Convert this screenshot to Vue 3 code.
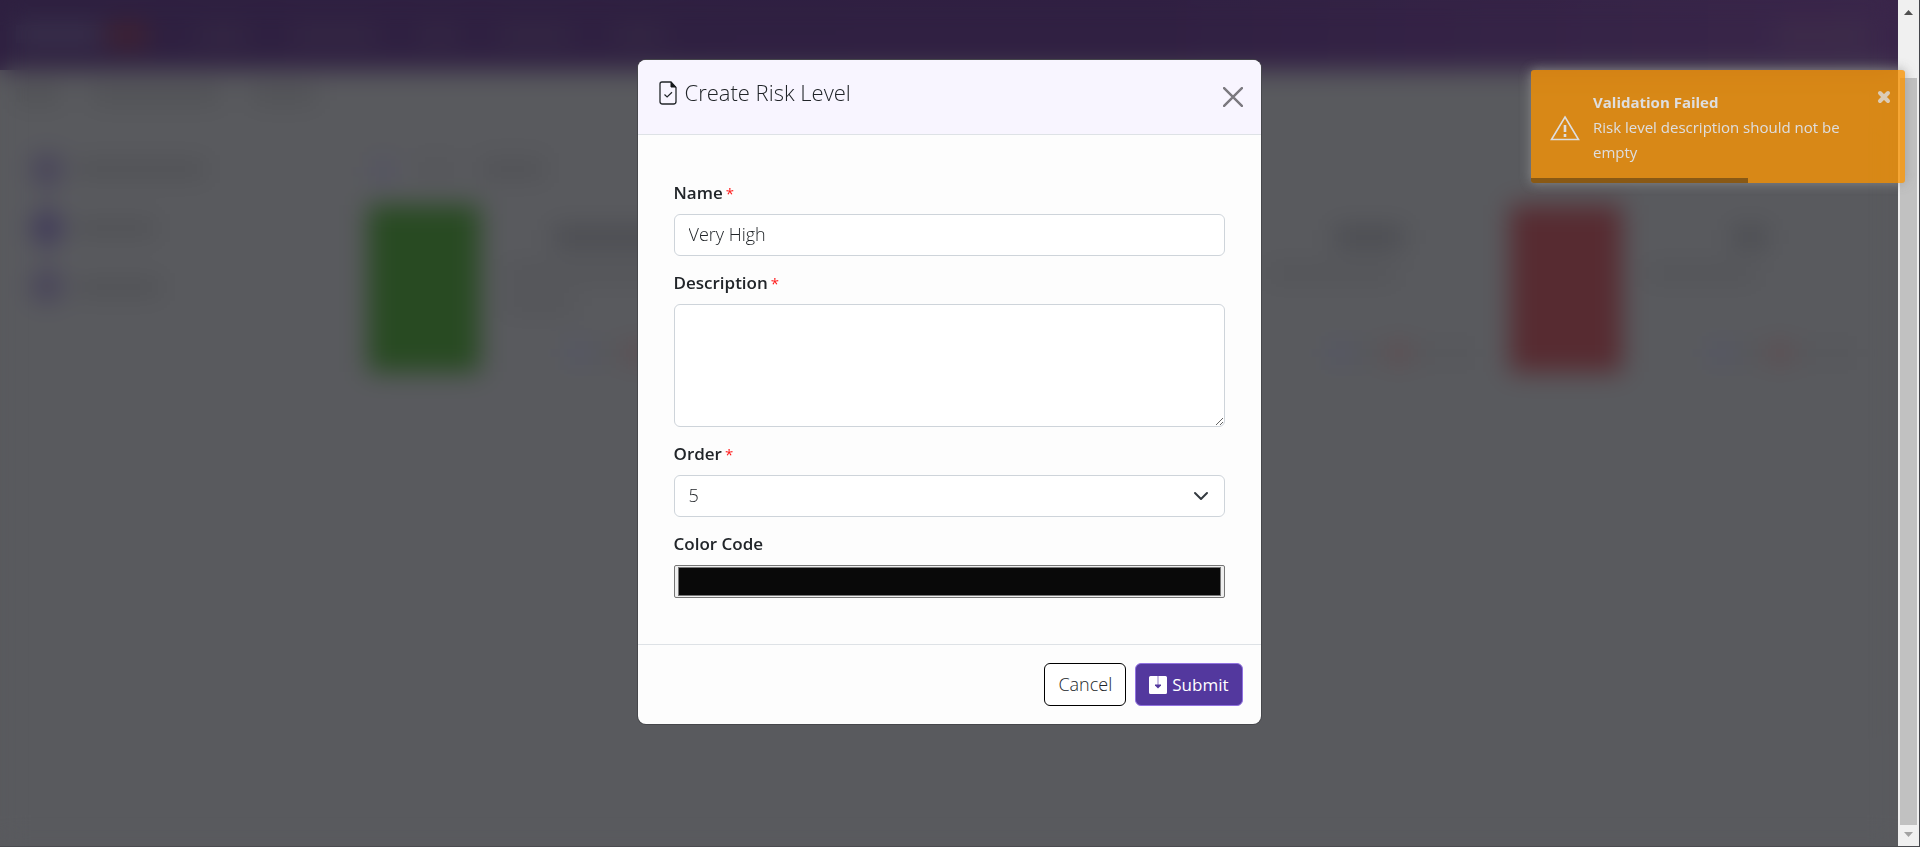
<script setup>
import { ref } from 'vue'

const name = ref('Very High')
const description = ref('')
const order = ref('5')
const color = ref('#090909')
const progress = ref(58)

const navItems = [50, 85, 35, 70, 50]
const crumbs = [45, 130, 65]
const steps = [
  { width: 130, active: false },
  { width: 80, active: true },
  { width: 85, active: false }
]
const levels = [
  { tone: 'green', title: 110, lines: [200, 70] },
  { tone: 'hidden', title: 80, lines: [180] },
  { tone: 'hidden', title: 70, lines: [130] },
  { tone: 'red', title: 34, lines: [110] }
]
</script>

<template>
  <div class="screen">
    <div class="content">
      <div class="page" aria-hidden="true">
        <div class="navbar">
          <div class="brand"><i class="brand-main"></i><i class="brand-accent"></i></div>
          <div class="nav-items">
            <i v-for="(w, n) in navItems" :key="n" class="nav-bar" :style="{ width: w + 'px' }"></i>
          </div>
          <i class="nav-bar account"></i>
        </div>
        <div class="crumbs">
          <i v-for="(w, n) in crumbs" :key="n" class="bar" :style="{ width: w + 'px' }"></i>
        </div>
        <div class="workspace">
          <div class="steps">
            <div v-for="(s, n) in steps" :key="n" class="step">
              <i class="dot" :class="{ active: s.active }"></i>
              <i class="bar" :style="{ width: s.width + 'px' }"></i>
            </div>
          </div>
          <div class="panel">
            <div class="panel-head"><i class="panel-dot"></i><i class="bar short"></i><i class="bar mid"></i></div>
            <div class="levels">
              <div v-for="(l, n) in levels" :key="n" class="level">
                <i class="swatch" :class="l.tone"></i>
                <div class="level-text">
                  <i class="bar dark" :style="{ width: l.title + 'px' }"></i>
                  <div class="lines">
                    <i v-for="(w, k) in l.lines" :key="k" class="bar" :style="{ width: w + 'px' }"></i>
                  </div>
                  <div class="actions"><i class="act blue"></i><i class="act word"></i><i class="act pink"></i><i class="act word"></i><i class="act word"></i></div>
                </div>
              </div>
            </div>
          </div>
        </div>
      </div>

      <div class="overlay">
        <form class="dialog" role="dialog" aria-labelledby="dialog-title" @submit.prevent>
          <header class="dialog-head">
            <h1 id="dialog-title">
              <svg class="title-icon" viewBox="0 0 18 24" aria-hidden="true">
                <path d="M3 1h9l5 5.500V20.500a2.500 2.500 0 0 1-2.500 2.500H3.500A2.500 2.500 0 0 1 1 20.500V3a2 2 0 0 1 2-2Z" fill="none" stroke="#212529" stroke-width="1.300" />
                <path d="M12 1.500v4.500h4.500Z" fill="#15171a" stroke="#15171a" stroke-width="1" />
                <path d="m5.500 13.500 2.600 2.400 4.900-4.700" fill="none" stroke="#212529" stroke-width="1.200" />
              </svg>
              <span>Create Risk Level</span>
            </h1>
            <button type="button" class="close" aria-label="Close">
              <svg viewBox="0 0 18 18" aria-hidden="true"><path d="m1 1 16 16M17 1 1 17" stroke="#7c7a80" stroke-width="2.200" stroke-linecap="round" /></svg>
            </button>
          </header>

          <div class="dialog-body">
            <div class="field">
              <label for="name">Name<span class="req">*</span></label>
              <input id="name" v-model="name" class="control" type="text" />
            </div>
            <div class="field">
              <label for="description">Description<span class="req">*</span></label>
              <textarea id="description" v-model="description" class="control area"></textarea>
            </div>
            <div class="field">
              <label for="order">Order<span class="req">*</span></label>
              <div class="select-wrap">
                <select id="order" v-model="order" class="control">
                  <option>1</option>
                  <option>2</option>
                  <option>3</option>
                  <option>4</option>
                  <option>5</option>
                </select>
                <svg class="chevron" viewBox="0 0 16 16" aria-hidden="true"><path d="m2 5 6 6 6-6" fill="none" stroke="#343a40" stroke-width="2" stroke-linecap="round" stroke-linejoin="round" /></svg>
              </div>
            </div>
            <div class="field">
              <label for="color">Color Code</label>
              <input id="color" v-model="color" class="color" type="color" />
            </div>
          </div>

          <footer class="dialog-foot">
            <button type="button" class="btn cancel">Cancel</button>
            <button type="submit" class="btn submit">
              <svg viewBox="0 0 18 18" aria-hidden="true">
                <path d="M1.500 0h15A1.500 1.500 0 0 1 18 1.500v15a1.500 1.500 0 0 1-1.500 1.500h-15A1.500 1.500 0 0 1 0 16.500v-15A1.500 1.500 0 0 1 1.500 0Z" fill="#fff" />
                <path d="M9 0v9" stroke="#8f7bc4" stroke-width="1" />
                <path d="M6 8.500h6v1L9 12.500l-3-3Z" fill="#53389e" />
              </svg>
              <span>Submit</span>
            </button>
          </footer>
        </form>
      </div>
    </div>

    <div class="scrollbar" aria-hidden="true">
      <svg viewBox="0 0 9 5"><path d="M0 5 4.500 0 9 5Z" fill="#505050" /></svg>
      <div class="track"><div class="thumb"></div></div>
      <svg viewBox="0 0 9 5"><path d="M0 0h9L4.500 5Z" fill="#a3a3a3" /></svg>
    </div>

    <div class="toast" role="alert">
      <svg class="warn" viewBox="0 0 30 26" aria-hidden="true">
        <path d="M15 2 28.500 24.500h-27Z" fill="none" stroke="#fff" stroke-width="1.600" />
        <path d="M15 10v7M15 19v3" stroke="#fff" stroke-width="2.600" />
      </svg>
      <div class="toast-text">
        <strong>Validation Failed</strong>
        <p>Risk level description should not be empty</p>
      </div>
      <button type="button" class="toast-close" aria-label="Dismiss">
        <svg viewBox="0 0 14 14" aria-hidden="true"><path d="m3 3 8 8M11 3l-8 8" stroke="#fff" stroke-width="4" stroke-linecap="round" /></svg>
      </button>
      <div class="toast-progress" :style="{ width: progress + '%' }"></div>
    </div>
  </div>
</template>

<style>
body {
  margin: 0;
}
</style>

<style scoped>
* {
  box-sizing: border-box;
}
.screen {
  position: relative;
  display: flex;
  min-height: 100vh;
  background: #595a5e;
  border-right: 1px solid #44454a;
  border-bottom: 1px solid #4a4b50;
  font-family: "Open Sans", "Noto Sans", sans-serif;
  font-size: 17px;
  line-height: 27px;
  color: #212529;
}
.content {
  position: relative;
  flex: 1;
  min-width: 0;
  display: flex;
}
i {
  display: block;
}

/* page under the dialog */
.page {
  flex: 1;
  min-width: 0;
  display: flex;
  flex-direction: column;
}
.navbar {
  display: flex;
  align-items: center;
  height: 70px;
  padding: 0 28px 0 16px;
  background: linear-gradient(90deg, #2e2040, #302042 60%, #3a264a);
}
.brand {
  display: flex;
  gap: 6px;
  width: 182px;
}
.brand-main {
  width: 85px;
  height: 18px;
  background: #3b344e;
}
.brand-accent {
  width: 40px;
  height: 20px;
  background: #43222e;
}
.nav-items {
  display: flex;
  flex: 1;
  gap: 44px;
}
.nav-bar {
  height: 14px;
  background: #362a44;
}
.account {
  width: 95px;
  background: #40304a;
}
.crumbs {
  display: flex;
  gap: 30px;
  height: 62px;
  padding: 18px 16px;
}
.bar {
  height: 14px;
  background: #4e4f53;
}
.workspace {
  flex: 1;
  display: flex;
  padding: 0 16px 112px 32px;
}
.steps {
  width: 303px;
  padding-top: 22px;
  background: linear-gradient(#514f60, #514f60) 12px 24px / 8px 130px no-repeat;
}
.step {
  display: flex;
  align-items: center;
  gap: 14px;
  height: 30px;
  margin-bottom: 29px;
}
.dot {
  width: 30px;
  height: 30px;
  border-radius: 15px;
  background: #454059;
}
.dot.active {
  background: #3b3458;
}
.panel {
  flex: 1;
  padding: 28px 6px 0 31px;
  border: 2px solid #55565a;
  border-radius: 8px;
}
.panel-head {
  display: flex;
  gap: 24px;
  height: 43px;
  padding-left: 6px;
}
.panel-dot {
  width: 18px;
  height: 18px;
  background: #504e66;
}
.short {
  width: 40px;
  background: #535458;
}
.mid {
  width: 65px;
}
.levels {
  display: grid;
  grid-template-columns: repeat(4, 1fr);
  gap: 17px;
}
.level {
  display: flex;
  height: 167px;
}
.swatch {
  width: 112px;
  background: #595a5e;
}
.green {
  background: #284a22;
}
.red {
  background: #572b31;
}
.level-text {
  flex: 1;
  display: flex;
  flex-direction: column;
  align-items: center;
  padding: 22px 20px 10px 24px;
}
.dark {
  height: 20px;
  background: #4a4b50;
}
.lines {
  align-self: stretch;
  display: flex;
  flex: 1;
  flex-direction: column;
  gap: 17px;
  padding-top: 19px;
}
.lines .bar {
  background: #525357;
}
.actions {
  display: flex;
  gap: 10px;
  padding-left: 60px;
}
.act {
  width: 20px;
  height: 18px;
}
.blue {
  background: #525468;
}
.pink {
  background: #5f484c;
}
.word {
  background: #545559;
}

/* dialog */
.overlay {
  position: absolute;
  inset: 0;
  padding: 60px 16px;
  backdrop-filter: blur(13px);
}
.dialog {
  width: 100%;
  max-width: 623px;
  margin: 0 auto;
  overflow: hidden;
  border-radius: 8px;
  background: #fdfdfd;
  box-shadow: 0 0 0 1px #46474b;
}
.dialog-head {
  display: flex;
  align-items: flex-start;
  justify-content: space-between;
  height: 75px;
  padding: 17px 18px 0 21px;
  background: #f8f5ff;
  border-bottom: 1px solid #dee2e6;
}
h1 {
  display: flex;
  align-items: flex-start;
  gap: 8px;
  margin: 0;
  font-size: 22px;
  line-height: 30px;
  font-weight: 300;
}
.title-icon {
  width: 18px;
  height: 24px;
  margin-top: 4px;
}
.close {
  display: flex;
  margin: 10px 0 0;
  padding: 0;
  border: 0;
  background: none;
}
.close svg {
  width: 20px;
  height: 20px;
}
.dialog-body {
  display: flex;
  flex-direction: column;
  gap: 13px;
  padding: 44px 36px 46px;
}
.field {
  display: flex;
  flex-direction: column;
  gap: 8px;
}
label {
  font-weight: 600;
}
.req {
  margin-left: 3px;
  color: #ff1a1a;
  font-size: 15px;
  line-height: 15px;
  font-weight: 400;
}
.control {
  display: block;
  width: 100%;
  height: 42px;
  margin: 0;
  padding: 0 14px 2px;
  border: 1px solid #ced4da;
  border-radius: 6px;
  background: #fff;
  font: inherit;
  font-size: 18px;
  font-weight: 300;
  color: #212529;
  appearance: none;
}
.area {
  height: 123px;
  resize: vertical;
}
.select-wrap {
  position: relative;
}
.chevron {
  position: absolute;
  top: 13px;
  right: 16px;
  width: 16px;
  height: 16px;
  pointer-events: none;
}
.color {
  display: block;
  width: 100%;
  height: 33px;
  margin: 0;
  padding: 1px 2px;
  border: 1px solid #767676;
  border-radius: 2px;
  background: #efefef;
}
.color::-webkit-color-swatch-wrapper {
  padding: 0 1px;
}
.color::-webkit-color-swatch {
  border: 1px solid #777;
}
.dialog-foot {
  display: flex;
  justify-content: flex-end;
  gap: 9px;
  padding: 18px;
  border-top: 1px solid #dee2e6;
}
.btn {
  display: flex;
  align-items: center;
  justify-content: center;
  gap: 5px;
  height: 43px;
  margin: 0;
  padding: 0 13px;
  border: 1px solid #000;
  border-radius: 6px;
  background: #fff;
  font: inherit;
  color: #212529;
}
.cancel {
  font-size: 18px;
  font-weight: 300;
}
.submit {
  background: #53389e;
  border-color: #9172e0;
  color: #fff;
}
.btn svg {
  width: 18px;
  height: 18px;
}

/* scrollbar */
.scrollbar {
  display: flex;
  flex-direction: column;
  align-items: center;
  width: 21px;
  padding: 10px 0 9px;
  background: #f0f0f0;
}
.scrollbar svg {
  width: 9px;
  height: 5px;
}
.track {
  flex: 1;
  width: 17px;
  display: flex;
  padding: 63px 0 7px;
}
.thumb {
  flex: 1;
  background: #c1c1c1;
}

/* toast */
.toast {
  position: absolute;
  top: 70px;
  right: 14px;
  display: flex;
  align-items: center;
  width: 374px;
  padding: 20px 14px 18px 19px;
  overflow: hidden;
  border-radius: 3px;
  background: #f89406;
  box-shadow: 0 0 12px #999;
  color: #fff;
  opacity: 0.8;
  font-size: 15px;
  line-height: 25px;
}
.warn {
  width: 30px;
  height: 26px;
  margin-right: 13px;
}
.toast-text {
  flex: 1;
}
.toast-text strong {
  display: block;
}
.toast-text p {
  margin: 0;
}
.toast-close {
  align-self: flex-start;
  display: flex;
  margin: 0;
  padding: 0;
  border: 0;
  background: none;
  opacity: 0.8;
}
.toast-close svg {
  width: 14px;
  height: 14px;
}
.toast-progress {
  position: absolute;
  left: 0;
  bottom: 0;
  height: 5px;
  background: #000;
  opacity: 0.4;
}
</style>
